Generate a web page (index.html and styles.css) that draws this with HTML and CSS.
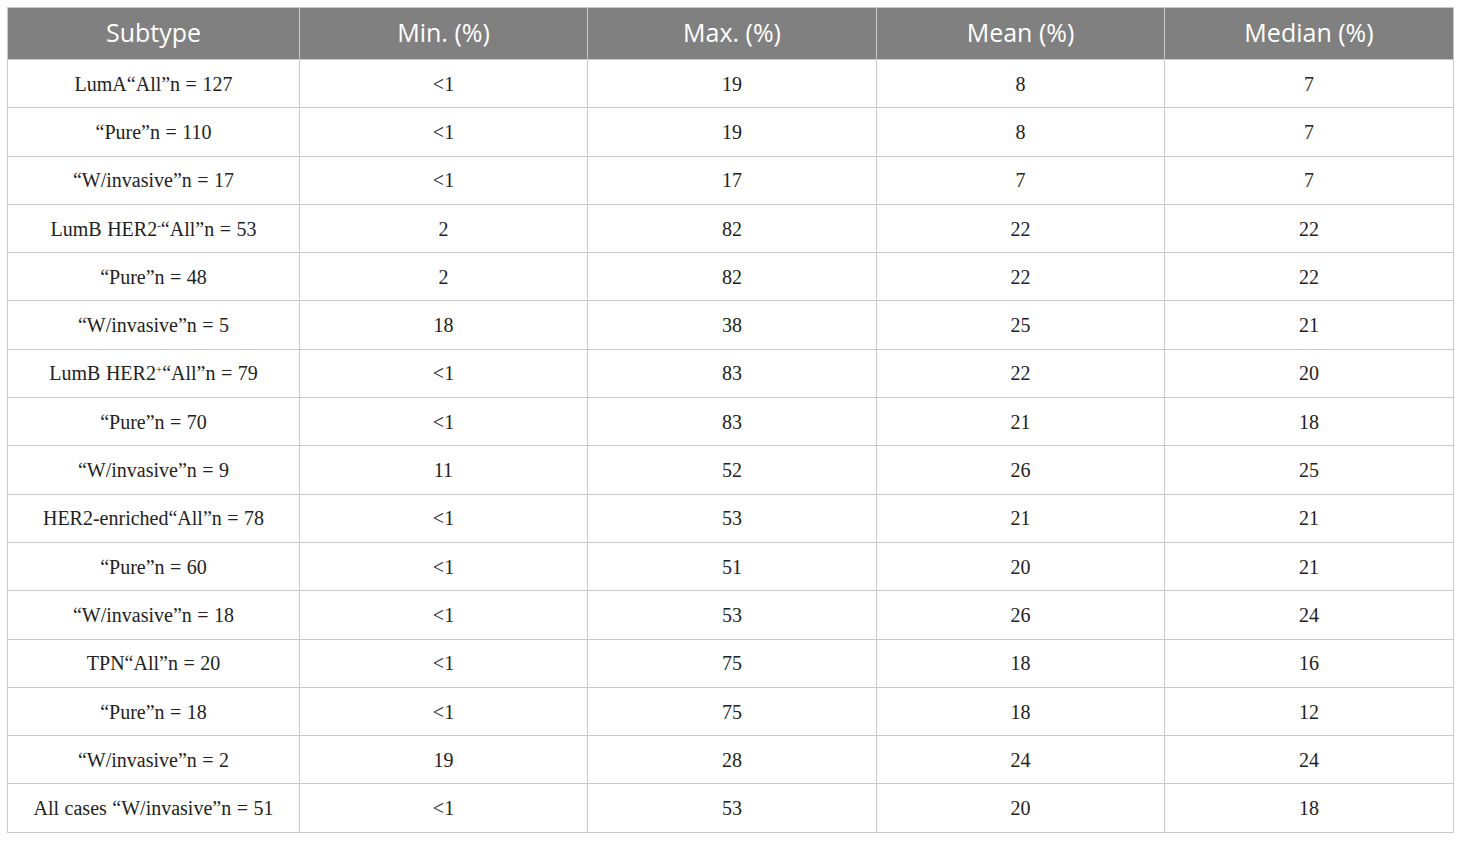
FILE: index.html
```html
<!DOCTYPE html>
<html>
<head>
<meta charset="utf-8">
<link rel="stylesheet" href="styles.css">
</head>
<body>
<table class="data">
<colgroup>
<col class="c1"><col class="c2"><col class="c3"><col class="c4"><col class="c5">
</colgroup>
<thead>
<tr><th>Subtype</th><th>Min. (%)</th><th>Max. (%)</th><th>Mean (%)</th><th>Median (%)</th></tr>
</thead>
<tbody>
<tr><td>LumA“All”n = 127</td><td>&lt;1</td><td>19</td><td>8</td><td>7</td></tr>
<tr><td>“Pure”n = 110</td><td>&lt;1</td><td>19</td><td>8</td><td>7</td></tr>
<tr><td>“W/invasive”n = 17</td><td>&lt;1</td><td>17</td><td>7</td><td>7</td></tr>
<tr><td>LumB HER2<sup>-</sup>“All”n = 53</td><td>2</td><td>82</td><td>22</td><td>22</td></tr>
<tr><td>“Pure”n = 48</td><td>2</td><td>82</td><td>22</td><td>22</td></tr>
<tr><td>“W/invasive”n = 5</td><td>18</td><td>38</td><td>25</td><td>21</td></tr>
<tr><td>LumB HER2<sup>+</sup>“All”n = 79</td><td>&lt;1</td><td>83</td><td>22</td><td>20</td></tr>
<tr><td>“Pure”n = 70</td><td>&lt;1</td><td>83</td><td>21</td><td>18</td></tr>
<tr><td>“W/invasive”n = 9</td><td>11</td><td>52</td><td>26</td><td>25</td></tr>
<tr><td>HER2-enriched“All”n = 78</td><td>&lt;1</td><td>53</td><td>21</td><td>21</td></tr>
<tr><td>“Pure”n = 60</td><td>&lt;1</td><td>51</td><td>20</td><td>21</td></tr>
<tr><td>“W/invasive”n = 18</td><td>&lt;1</td><td>53</td><td>26</td><td>24</td></tr>
<tr><td>TPN“All”n = 20</td><td>&lt;1</td><td>75</td><td>18</td><td>16</td></tr>
<tr><td>“Pure”n = 18</td><td>&lt;1</td><td>75</td><td>18</td><td>12</td></tr>
<tr><td>“W/invasive”n = 2</td><td>19</td><td>28</td><td>24</td><td>24</td></tr>
<tr><td>All cases “W/invasive”n = 51</td><td>&lt;1</td><td>53</td><td>20</td><td>18</td></tr>
</tbody>
</table>
</body>
</html>
```
FILE: styles.css
```css
html, body {
  margin: 0;
  padding: 0;
  background: #ffffff;
}
body {
  padding: 7px 7px 0 7px;
}
.data {
  border-collapse: collapse;
  width: 1446px;
  table-layout: fixed;
}
.c1 { width: 292px; }
.c2 { width: 288px; }
.c3 { width: 289px; }
.c4 { width: 288px; }
.c5 { width: 289px; }
.data th {
  background: #7f807f;
  color: #ffffff;
  font-family: "Open Sans", "Noto Sans", sans-serif;
  font-weight: 400;
  font-size: 25px;
  line-height: 30px;
  height: 48px;
  padding: 0 0 3px 0;
  border: 1px solid #c9c9c9;
  text-align: center;
  vertical-align: middle;
}
.data td {
  font-family: "Liberation Serif", "DejaVu Serif", serif;
  font-size: 20px;
  line-height: 24px;
  word-spacing: 0.5px;
  color: #222222;
  height: 47.3px;
  padding: 0;
  border: 1px solid #c9c9c9;
  text-align: center;
  vertical-align: middle;
}
.data sup {
  font-size: 11px;
  line-height: 0;
  vertical-align: 7px;
}
```
